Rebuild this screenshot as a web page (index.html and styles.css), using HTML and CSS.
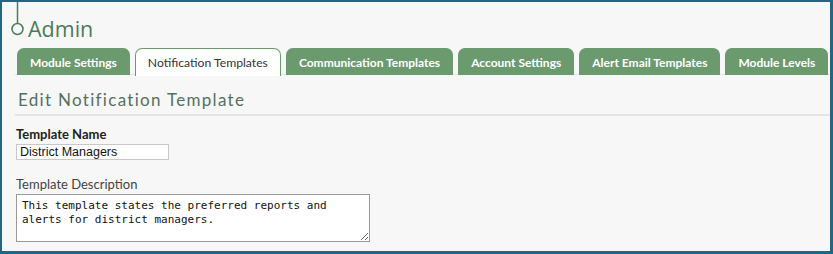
FILE: index.html
```html
<!DOCTYPE html>
<html lang="en">
<head>
    <meta charset="UTF-8">
    <title>Admin - Edit Notification Template</title>
    <link rel="stylesheet" href="styles.css">
</head>
<body>
    <div class="frame">
        <header class="page-head">
            <svg class="head-mark" width="16" height="36" viewBox="0 0 16 36">
                <line x1="7.5" y1="0" x2="7.5" y2="21" stroke="#4f7a5c" stroke-width="1.5"/>
                <circle cx="7.5" cy="27" r="5.5" fill="none" stroke="#4f7a5c" stroke-width="1.5"/>
            </svg>
            <h1>Admin</h1>
        </header>

        <nav class="tabs">
            <a href="#" class="tab">Module Settings</a>
            <a href="#" class="tab active">Notification Templates</a>
            <a href="#" class="tab">Communication Templates</a>
            <a href="#" class="tab">Account Settings</a>
            <a href="#" class="tab">Alert Email Templates</a>
            <a href="#" class="tab">Module Levels</a>
        </nav>

        <section class="panel">
            <h2>Edit Notification Template</h2>
            <form class="template-form">
                <div class="field">
                    <label for="templateName" class="label-strong">Template Name</label>
                    <input type="text" id="templateName" value="District Managers">
                </div>
                <div class="field">
                    <label for="templateDesc">Template Description</label>
                    <textarea id="templateDesc">This template states the preferred reports and alerts for district managers.</textarea>
                </div>
            </form>
        </section>
    </div>
</body>
</html>
```

FILE: styles.css
```css
:root {
    --frame-color: #236684;
    --tab-green: #6b9a6f;
    --heading-color: #4f7a5c;
    --background-color: #f7f7f7;
    --rule-color: #e4e4e4;
}

* {
    margin: 0;
    padding: 0;
    box-sizing: border-box;
}

body {
    font-family: 'Lato', sans-serif;
    color: #222;
}

.frame {
    width: 833px;
    height: 254px;
    background-color: var(--background-color);
    border: 2px solid var(--frame-color);
    border-right-width: 3px;
    border-bottom-width: 3px;
    overflow: hidden;
}

.page-head {
    display: flex;
    align-items: flex-start;
    height: 46px;
    padding-left: 8px;
}

.head-mark {
    flex: none;
}

.page-head h1 {
    margin-top: 13px;
    margin-left: 2px;
    font-family: 'Open Sans', sans-serif;
    font-size: 21.5px;
    font-weight: 400;
    line-height: 28px;
    color: var(--heading-color);
}

.tabs {
    display: flex;
    gap: 5px;
    height: 27px;
    border-bottom: 1px solid var(--rule-color);
    padding-left: 2px;
    margin-left: 13px;
}

.tab {
    display: flex;
    align-items: center;
    height: 27px;
    padding: 0 12px;
    background-color: var(--tab-green);
    border: 1px solid var(--tab-green);
    border-bottom: none;
    border-radius: 7px 7px 0 0;
    color: #fff;
    font-size: 12px;
    font-weight: 700;
    text-decoration: none;
    white-space: nowrap;
}

.tab.active {
    background-color: #fff;
    color: #333;
    font-size: 12.2px;
    font-weight: 400;
    height: 28px;
}

.panel {
    margin-left: 13px;
}

.panel h2 {
    padding: 14px 0 4px 3px;
    border-bottom: 2px solid var(--rule-color);
    font-size: 17px;
    font-weight: 400;
    letter-spacing: 1.3px;
    color: #55705e;
}

.template-form {
    padding: 10px 0 0 1px;
}

.field {
    display: flex;
    flex-direction: column;
    align-items: flex-start;
    margin-bottom: 16px;
}

.field label {
    font-size: 13px;
    color: #444;
    margin-bottom: 2px;
}

.field .label-strong {
    font-weight: 700;
    color: #222;
}

.field input {
    width: 153px;
    height: 16px;
    padding: 0 3px;
    border: 1px solid #c8c8c8;
    background: #fff;
    font-family: 'Liberation Sans', Arial, sans-serif;
    font-size: 12.5px;
    color: #111;
}

.field textarea {
    width: 354px;
    height: 48px;
    padding: 4px 5px;
    border: 1px solid #999;
    background: #fff;
    font-family: 'DejaVu Sans Mono', monospace;
    font-size: 11px;
    line-height: 14px;
    color: #111;
    resize: both;
}
```
